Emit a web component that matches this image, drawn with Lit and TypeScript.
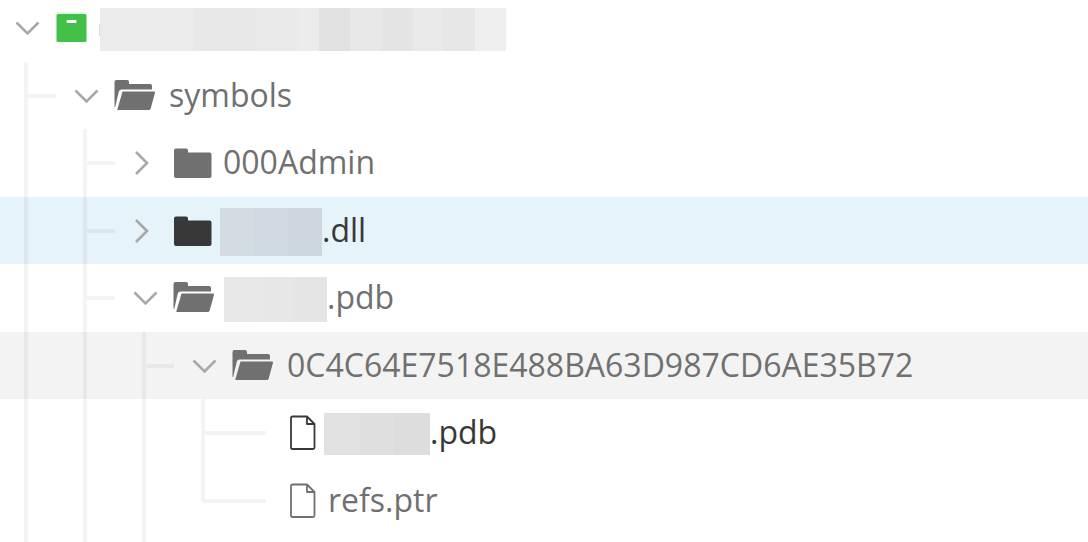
import { LitElement, html, css, svg, nothing } from "lit";
import { customElement, property } from "lit/decorators.js";
import { classMap } from "lit/directives/class-map.js";

type Icon = "repo" | "open" | "closed" | "file";

interface Node {
  name: string;
  icon: Icon;
  level: number;
  mask?: "root" | "dll" | "pdb" | "leaf";
  last?: boolean;
  dark?: boolean;
  state?: "selected" | "focused";
}

const NODES: Node[] = [
  { name: "", icon: "repo", level: 0, mask: "root" },
  { name: "symbols", icon: "open", level: 1 },
  { name: "000Admin", icon: "closed", level: 2 },
  { name: ".dll", icon: "closed", level: 2, mask: "dll", dark: true, state: "selected" },
  { name: ".pdb", icon: "open", level: 2, mask: "pdb" },
  { name: "0C4C64E7518E488BA63D987CD6AE35B72", icon: "open", level: 3, state: "focused" },
  { name: ".pdb", icon: "file", level: 4, mask: "leaf", dark: true },
  { name: "refs.ptr", icon: "file", level: 4, last: true },
];

const ICONS = {
  repo: svg`<svg width="33" height="32" viewBox="0 0 33 32">
    <rect x="2" y="0" width="29" height="4" rx="1" fill="#e2f5e2"/>
    <rect x="1.500" y="2" width="30" height="28" rx="1.500" fill="#43c047"/>
    <rect x="11.500" y="8" width="10" height="3" rx="1" fill="#ffffff"/>
  </svg>`,
  open: svg`<svg width="43" height="32" viewBox="0 1 43 32">
    <path fill="currentColor" d="M.5 28V3q0-2 2-2h10.500q2 0 2 2v2h21q2 0 2 2v3.500H7.500q-2 0-2.700 2L1.200 28z"/>
    <path fill="currentColor" d="M8.500 12.500H40q1.300 0 1 1.200l-4.300 15.700q-.4 1.600-2 1.600H3.200z"/>
  </svg>`,
  closed: svg`<svg width="39" height="32" viewBox="0 0 39 32">
    <path fill="currentColor" d="M3 1.500h10q2 0 2 2v2h21.500q2 0 2 2v21.500q0 2-2 2H3q-2 0-2-2V3.500q0-2 2-2z"/>
  </svg>`,
  file: svg`<svg width="26" height="36" viewBox="0 0 26 36">
    <path fill="none" stroke="currentColor" stroke-width="1.800" stroke-linejoin="round" d="M2.500 1.500h14.500l7.500 7.500v23.500q0 1.500-1.500 1.500H2.500q-1.500 0-1.500-1.500V3q0-1.500 1.500-1.500zM17 1.500v7.500h7.500"/>
  </svg>`,
};

@customElement("tree-row")
export class TreeRow extends LitElement {
  @property({ attribute: false }) node!: Node;

  static styles = css`
    :host { display: block; }
    .row {
      display: flex;
      height: 100%;
      align-items: center;
      color: #707070;
      white-space: nowrap;
    }
    .dark { color: #383838; }
    .selected { background: #e6f3f8; }
    .focused { background: #f3f3f3; }
    .guide {
      box-sizing: border-box;
      display: flex;
      flex: none;
      align-self: stretch;
      align-items: center;
      width: 59px;
      padding-left: 24px;
    }
    .guide::before {
      content: "";
      align-self: stretch;
      width: 4px;
      background: rgba(0, 0, 0, 0.045);
    }
    .branch::after {
      content: "";
      width: 28px;
      height: 4px;
      background: rgba(0, 0, 0, 0.045);
    }
    .leaf { width: 113px; }
    .leaf::after { width: 61px; }
    .end::before {
      align-self: flex-start;
      height: calc(50% + 2px);
      border-bottom-left-radius: 3px;
    }
    .toggle {
      display: flex;
      flex: none;
      box-sizing: border-box;
      width: 55px;
      height: 32px;
      padding: 0 0 0 15px;
      border: 0;
      background: none;
      color: #a8a8a8;
      align-items: center;
    }
    .icon { display: flex; flex: none; color: #707070; }
    .dark .icon { color: #383838; }
    .label {
      display: flex;
      align-items: center;
      margin-left: 12px;
      line-height: 42px;
    }
    .closed .label { margin-left: 11px; }
    .row .masked { margin-left: 8px; }
    .name { padding-bottom: 2px; }
    .mask { flex: none; margin-top: 2px; }
    .mask-root {
      width: 407px;
      height: 43px;
      margin-left: 3px;
      background:
        linear-gradient(#dddddd, #dddddd) 0 16px / 1px 12px no-repeat,
        linear-gradient(90deg, transparent 1px, #ebebeb 1px 95px, #e8e8e8 95px 157px, #eaeaea 157px 201px,
        #ececec 201px 220px, #e1e1e1 220px 251px, #e8e8e8 251px 283px, #e4e4e4 283px 314px,
        #eaeaea 314px 344px, #e7e7e7 344px 376px, #efefef 376px);
    }
    .mask-dll {
      width: 102px;
      height: 48px;
      background: linear-gradient(90deg, #d2dce1 34px, #cfd9df 34px 68px, #cdd8de 68px);
    }
    .mask-pdb {
      width: 103px;
      height: 45px;
      background: linear-gradient(90deg, #e8e8e8 34px, #e7e7e7 34px 68px, #e5e5e5 68px);
    }
    .mask-leaf {
      width: 106px;
      height: 42px;
      background: linear-gradient(90deg, #e1e1e1 36px, #dfdfdf 36px 70px, #dddddd 70px);
    }
  `;

  render() {
    const n = this.node;
    const leaf = n.icon === "file";
    const closed = n.icon === "closed";
    const guides = Array.from({ length: n.level }, (_, i) => {
      const branch = i === n.level - 1;
      return html`<span class=${classMap({
        guide: true, branch, leaf: branch && leaf, end: branch && !!n.last,
      })}></span>`;
    });
    return html`<div class=${classMap({
      row: true, dark: !!n.dark, closed,
      selected: n.state === "selected", focused: n.state === "focused",
    })}>
      ${guides}
      ${leaf ? nothing : html`<button class="toggle" aria-label=${closed ? "Expand" : "Collapse"}>
        <svg width="26" height="26" viewBox="0 0 26 26" fill="none" stroke="currentColor" stroke-width="2.600">
          <path d=${closed ? "M3 2L14 13 3 24" : "M1.500 7.500L12.500 18.500 23.500 7.500"}></path>
        </svg>
      </button>`}
      <span class="icon">${ICONS[n.icon]}</span>
      <span class=${classMap({ label: true, masked: !!n.mask })}>
        ${n.mask ? html`<span class="mask mask-${n.mask}"></span>` : nothing}<span class="name">${n.name}</span>
      </span>
    </div>`;
  }
}

@customElement("app-root")
export class AppRoot extends LitElement {
  static styles = css`
    :host {
      display: block;
      box-sizing: border-box;
      height: 100vh;
      overflow: hidden;
      background: #ffffff;
      font: 32px "Open Sans", "Noto Sans", sans-serif;
    }
    .tree {
      display: flex;
      flex-direction: column;
      height: 100%;
      margin-top: -6px;
    }
    .item { flex: none; height: 67px; }
    .item:nth-child(odd) { height: 68px; }
    .rest {
      flex: 1 0 14px;
      background:
        linear-gradient(#f4f4f4, #f4f4f4) 24px 0 / 4px 100% no-repeat,
        linear-gradient(#f4f4f4, #f4f4f4) 83px 0 / 4px 100% no-repeat,
        linear-gradient(#f4f4f4, #f4f4f4) 142px 0 / 4px 100% no-repeat;
    }
  `;

  render() {
    return html`<div class="tree" role="tree">
      ${NODES.map((n) => html`<tree-row class="item" role="treeitem" aria-level=${n.level + 1} .node=${n}></tree-row>`)}
      <div class="rest" role="presentation"></div>
    </div>`;
  }
}
